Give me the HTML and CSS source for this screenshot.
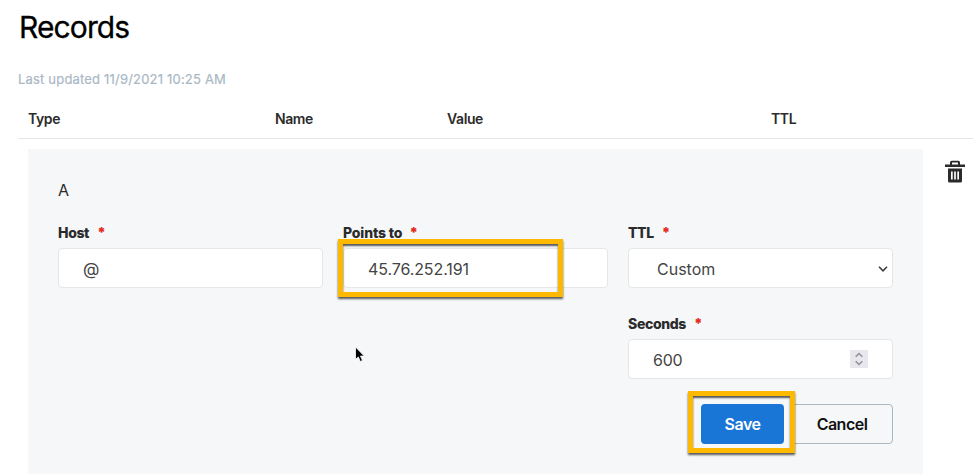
FILE: index.html
```html
<!DOCTYPE html>
<html lang="en">
<head>
<meta charset="utf-8">
<title>Records</title>
<link rel="stylesheet" href="styles.css">
</head>
<body>
<main class="page">
  <h1 class="title">Records</h1>
  <p class="updated">Last updated 11/9/2021 10:25 AM</p>
  <div class="columns">
    <span>Type</span><span>Name</span><span>Value</span><span>TTL</span>
  </div>
  <div class="record">
    <section class="panel">
      <div class="kind">A</div>
      <div class="fields">
        <div class="field">
          <div class="label"><span>Host</span><b>*</b></div>
          <div class="box"><span class="at">@</span></div>
        </div>
        <div class="field">
          <div class="label points"><span>Points to</span><b>*</b></div>
          <div class="box ip"><span>45.76.252.191</span><div class="mark mark-ip"></div></div>
        </div>
        <div class="field">
          <div class="label"><span>TTL</span><b>*</b></div>
          <div class="box select"><span>Custom</span>
            <svg class="chevron" width="10" height="6" viewBox="0 0 10 6"><path d="M1 .8l4 4 4-4"/></svg>
          </div>
        </div>
        <div class="field seconds">
          <div class="label"><span>Seconds</span><b>*</b></div>
          <div class="box number"><span>600</span>
            <svg class="stepper" width="18" height="18" viewBox="0 0 18 18"><path d="M5.7 6.8L9 3.5l3.300 3.300M5.700 11.200L9 14.500l3.300-3.300"/></svg>
          </div>
        </div>
      </div>
      <div class="actions">
        <div class="save"><span>Save</span><div class="mark mark-save"></div></div>
        <div class="cancel"><span>Cancel</span></div>
      </div>
    </section>
    <svg class="trash" width="20" height="24" viewBox="0 0 20 24">
      <path d="M0 4.500h5V2.500Q5 .800 6.700.800h6.600Q15 .800 15 2.500v2h5V7H0zM7 2.500v2h6v-2zM3 8.500h14V21q0 1.500-1.500 1.500h-11Q3 22.500 3 21zM6 11.500v8h1.700v-8zM9.150 11.500v8h1.700v-8zM12.300 11.500v8H14v-8z" fill="#2b2b2b" fill-rule="evenodd"/>
    </svg>
  </div>
</main>
<svg class="cursor" width="12" height="18" viewBox="0 0 12 18"><path d="M1.500 1v12.500l2.800-2.600 2 4.600 2.200-1-2-4.400h3.800z" fill="#000" stroke="#fff" stroke-width=".8"/></svg>
</body>
</html>
```
FILE: styles.css
```css
* { box-sizing: border-box; }
body { margin: 0; width: 980px; height: 476px; overflow: hidden; background: #fff; color: #2b2b2b; font-family: Inter, "Liberation Sans", sans-serif; position: relative; }
.page { padding-left: 18px; }
.title { margin: 0; height: 56px; padding-left: 1px; font-size: 30px; line-height: 55px; font-weight: 400; color: #000; letter-spacing: -.9px; -webkit-text-stroke: .3px #000; }
.updated { margin: 0; height: 46px; font-size: 13px; line-height: 46px; color: #a9b8c5; letter-spacing: .19px; -webkit-text-stroke: .2px #a9b8c5; }
.columns { width: 955px; height: 37px; padding-left: 10px; display: grid; grid-template-columns: 247px 172px 324px 1fr; border-bottom: 1px solid #e5e6e7; font-size: 14px; line-height: 34px; font-weight: 600; letter-spacing: -.4px; }
.record { display: flex; align-items: flex-start; padding: 10px 0 0 10px; }
.panel { width: 895px; height: 325px; padding: 29px 30px 0; background: #f5f7f9; }
.kind { height: 44px; font-size: 16px; line-height: 24px; }
.fields { display: grid; grid-template-columns: repeat(3, 265px); gap: 25px 20px; }
.seconds { grid-column: 3; }
.label { display: flex; gap: 8px; height: 26px; font-size: 14px; line-height: 22px; font-weight: 800; letter-spacing: -.35px; }
.points { letter-spacing: -.15px; gap: 7px; }
.label b { color: #e22b1b; }
.box { position: relative; height: 40px; padding-left: 24px; border: 1px solid #e4e6e8; border-radius: 4px; background: #fff; color: #444; font-size: 16px; line-height: 40px; }
.at { font-size: 17px; line-height: 38px; }
.ip { letter-spacing: -.1px; }
.select { padding-left: 28px; }
.number { letter-spacing: -.2px; }
.chevron, .stepper { position: absolute; fill: none; }
.chevron { right: 4px; top: 17px; stroke: #3c3c3c; stroke-width: 1.600; }
.stepper { right: 24px; top: 10px; background: #e8e7ed; stroke: #918f9d; stroke-width: 1.500; }
.mark { position: absolute; z-index: 2; border: 5px solid #fcb900; box-shadow: 0 2px 2px rgba(0,0,0,.65), inset 0 2px 2px rgba(0,0,0,.65); }
.mark-ip { left: -6px; top: -10px; width: 225px; height: 58px; }
.actions { display: flex; justify-content: flex-end; padding-top: 25px; font-size: 16px; line-height: 40px; font-weight: 600; text-align: center; letter-spacing: -.5px; }
.save { position: relative; width: 83px; height: 40px; margin-right: 7px; border-radius: 4px; background: #1976d6; color: #fff; }
.mark-save { left: -13px; top: -13px; width: 107px; height: 62px; }
.cancel { width: 102px; height: 40px; border: 1px solid #a9b8c3; border-radius: 4px; color: #111; line-height: 38px; }
.trash { margin: 11px 0 0 22px; }
.cursor { position: absolute; left: 354px; top: 346px; }
```
